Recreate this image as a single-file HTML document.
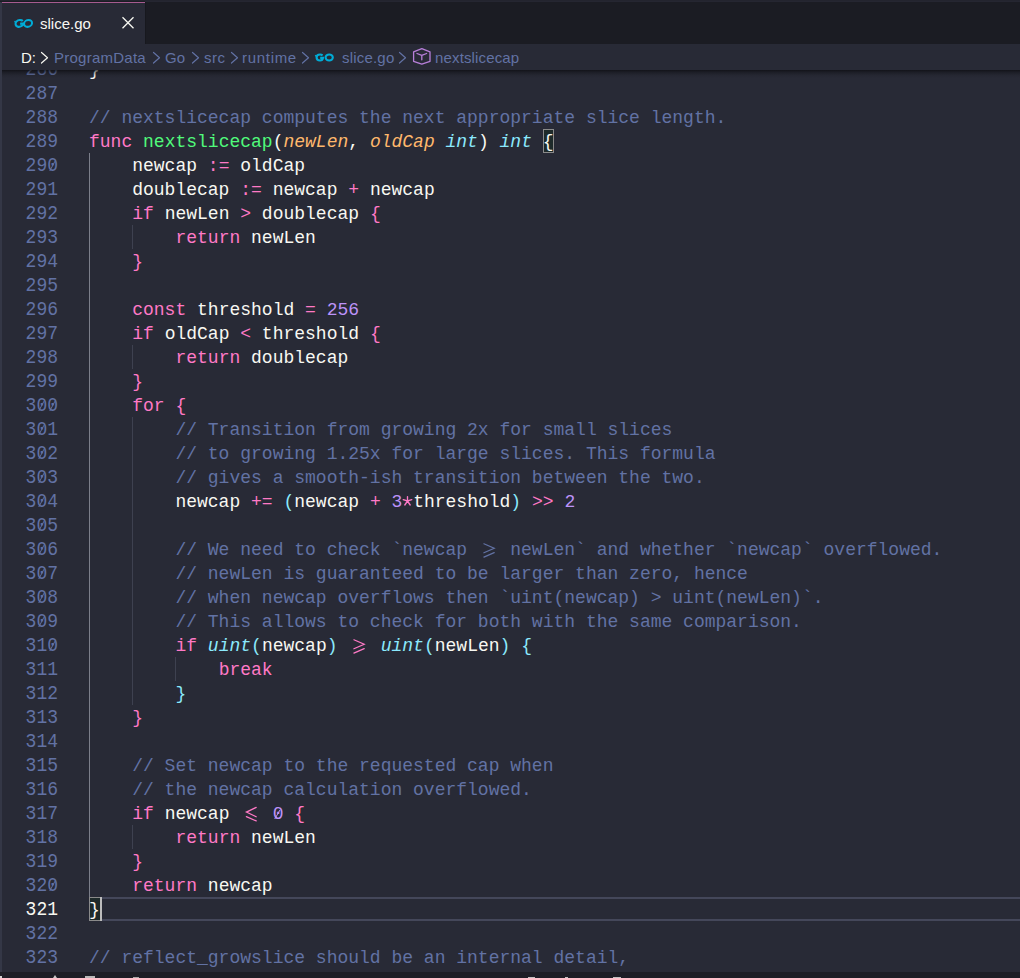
<!DOCTYPE html>
<html><head><meta charset="utf-8">
<style>
html,body{margin:0;padding:0}
body{width:1020px;height:978px;overflow:hidden;position:relative;background:#282a36;font-family:"Liberation Mono",monospace}
.tabs{position:absolute;left:0;top:0;width:1020px;height:44px;background:#1b1c23}
.tabs .topline{position:absolute;left:145px;top:0;width:875px;height:2px;background:#252631}
.tab{position:absolute;left:0;top:2px;width:145px;height:42px;background:#282a36}
.tab .bt{position:absolute;left:0;top:0;width:145px;height:1px;background:#a65b8f}
.tab .nm{position:absolute;left:40px;top:13px;font-family:"Liberation Sans",sans-serif;font-size:15px;color:#f8f8f2;line-height:18px}
.tabedge{position:absolute;left:145px;top:2px;width:1px;height:42px;background:#17181e}
.bc{position:absolute;left:0;top:44px;width:1020px;height:26px;background:#282a36;z-index:5;font-family:"Liberation Sans",sans-serif;font-size:15px;color:#6272a4}
.bc span{position:absolute;top:6px;line-height:16px;white-space:pre}
.shadow{position:absolute;left:0;top:70px;width:1020px;height:8px;background:linear-gradient(rgba(10,11,14,0.72),rgba(10,11,14,0.38) 30%,rgba(10,11,14,0.12) 65%,rgba(10,11,14,0));z-index:5}
.leftbar{position:absolute;left:0;top:2px;width:2px;height:976px;background:#343746;z-index:8}
.status{position:absolute;left:0;top:972px;width:1020px;height:6px;background:#1d1e26;z-index:8}
.ln{position:absolute;left:0;width:58px;transform:scaleY(1.08);transform-origin:0 17px;text-align:right;font-size:18px;line-height:24px;height:24px;color:#6272a4;white-space:pre}
.ln.act{color:#f8f8f2}
.cl{position:absolute;left:89px;font-size:18px;line-height:24px;height:24px;color:#f8f8f2;white-space:pre}
.ig{position:absolute;width:1px;background:#3e4150}
.ig.on{background:#7b7e8a}
.k{color:#ff79c6}.f{color:#f8f8f2}.fn{color:#50fa7b}.pa{color:#ffb86c;font-style:italic}.ty{color:#8be9fd;font-style:italic}
.nu{color:#bd93f9}.cm{color:#6272a4}.c{color:#8be9fd}.bm{color:#f8f8f2}
.lig{display:inline-block;width:21.6px;height:24px;vertical-align:top}
.hl{position:absolute;left:89px;top:897px;width:931px;height:20px;border-top:2px solid #44475a;border-bottom:2px solid #44475a}
.box{position:absolute;border:1px solid #8a8a8a;background:#1e2a2a;box-sizing:border-box}
.cursor{position:absolute;left:100px;top:897px;width:2px;height:24px;background:#bcbcbc;z-index:3}
.z{position:relative;display:inline-block;width:10.8px}
.z::after{content:"";position:absolute;left:4.8px;top:7.5px;width:1.1px;height:8.5px;background:currentColor;transform:skewX(-30deg)}
.ast{display:inline-block;width:10.8px;height:24px;vertical-align:top}
</style></head><body>
<div class="tabs">
  <div class="topline"></div>
  <div class="tab"><div class="bt"></div>
    <svg style="position:absolute;left:13px;top:16px" width="22" height="12" viewBox="0 0 22 12"><g fill="none" stroke="#00acd7" stroke-width="2.05" transform="translate(0.9,0) skewX(-8)"><path d="M1.2 2.9 L2.1 4.3" stroke-width="1.3"/><path d="M9.3 3 A4 3.45 0 1 0 10.4 5.6 L7 5.6"/><ellipse cx="14.9" cy="5.4" rx="3.95" ry="3.45"/></g></svg>
    <div class="nm">slice.go</div>
    <svg style="position:absolute;left:121px;top:14px" width="14" height="14" viewBox="0 0 14 14"><path d="M1.5 1.2 L12.5 12.2 M12.5 1.2 L1.5 12.2" stroke="#f8f8f2" stroke-width="1.3"/></svg>
  </div>
  <div class="tabedge"></div>
</div>
<div class="bc">
  <span style="left:21px;color:#f8f8f2">D:</span>
  <span style="left:54px;letter-spacing:0.25px">ProgramData</span>
  <span style="left:165px">Go</span>
  <span style="left:204px;letter-spacing:0.5px">src</span>
  <span style="left:242px;letter-spacing:0.7px">runtime</span>
  <span style="left:342px;letter-spacing:0.2px">slice.go</span>
  <span style="left:435px;letter-spacing:0.15px">nextslicecap</span>
  <svg style="position:absolute;left:0;top:0" width="1020" height="26" viewBox="0 44 1020 26">
    <g fill="none" stroke-width="1.2" stroke-linecap="round" stroke-linejoin="round">
      <path d="M41.5 52.5 L47.5 57.8 L41.5 63" stroke="#f8f8f2"/>
      <path d="M153.5 52.5 L159.5 57.8 L153.5 63" stroke="#6272a4"/>
      <path d="M192.5 52.5 L198.5 57.8 L192.5 63" stroke="#6272a4"/>
      <path d="M231.5 52.5 L237.5 57.8 L231.5 63" stroke="#6272a4"/>
      <path d="M302.5 52.5 L308.5 57.8 L302.5 63" stroke="#6272a4"/>
      <path d="M399.5 52.5 L405.5 57.8 L399.5 63" stroke="#6272a4"/>
      <path d="M421.8 48.6 L430 51.8 L430 61.3 L421.8 64.2 L413.6 61.3 L413.6 51.8 Z M417 53.5 L421.8 55.3 L426.6 53.5 M421.8 55.3 L421.8 59.8" stroke="#b77fd9" stroke-width="1.3"/>
    </g>
    <g transform="translate(315,53.5)" fill="none" stroke="#00acd7" stroke-width="2.1">
      <path d="M0.3 1.6 L1.1 3" stroke-width="1.3"/>
      <path d="M7.6 1.8 C6.8 1.2 5.9 1 5 1 C3 1 1.6 2.3 1.6 4 C1.6 5.7 3 7 5 7 C6.6 7 7.8 6 8 4.4 L5.2 4.4"/>
      <ellipse cx="14.2" cy="4" rx="3.6" ry="3"/>
    </g>
  </svg>
</div>
<div class="shadow"></div>
<div class="hl"></div>
<div class="box" style="left:543px;top:129px;width:11px;height:24px"></div>
<div class="box" style="left:89px;top:897px;width:13px;height:24px"></div>
<div class="ig on" style="left:89px;top:153px;height:744px"></div>
<div class="ig" style="left:132px;top:225px;height:24px"></div>
<div class="ig" style="left:132px;top:345px;height:24px"></div>
<div class="ig" style="left:132px;top:417px;height:288px"></div>
<div class="ig" style="left:175px;top:657px;height:24px"></div>
<div class="ig" style="left:132px;top:825px;height:24px"></div>
<div class="ln" style="top:58px">286</div>
<div class="ln" style="top:82px">287</div>
<div class="ln" style="top:106px">288</div>
<div class="ln" style="top:130px">289</div>
<div class="ln" style="top:154px">29<span class="z">0</span></div>
<div class="ln" style="top:178px">291</div>
<div class="ln" style="top:202px">292</div>
<div class="ln" style="top:226px">293</div>
<div class="ln" style="top:250px">294</div>
<div class="ln" style="top:274px">295</div>
<div class="ln" style="top:298px">296</div>
<div class="ln" style="top:322px">297</div>
<div class="ln" style="top:346px">298</div>
<div class="ln" style="top:370px">299</div>
<div class="ln" style="top:394px">3<span class="z">0</span><span class="z">0</span></div>
<div class="ln" style="top:418px">3<span class="z">0</span>1</div>
<div class="ln" style="top:442px">3<span class="z">0</span>2</div>
<div class="ln" style="top:466px">3<span class="z">0</span>3</div>
<div class="ln" style="top:490px">3<span class="z">0</span>4</div>
<div class="ln" style="top:514px">3<span class="z">0</span>5</div>
<div class="ln" style="top:538px">3<span class="z">0</span>6</div>
<div class="ln" style="top:562px">3<span class="z">0</span>7</div>
<div class="ln" style="top:586px">3<span class="z">0</span>8</div>
<div class="ln" style="top:610px">3<span class="z">0</span>9</div>
<div class="ln" style="top:634px">31<span class="z">0</span></div>
<div class="ln" style="top:658px">311</div>
<div class="ln" style="top:682px">312</div>
<div class="ln" style="top:706px">313</div>
<div class="ln" style="top:730px">314</div>
<div class="ln" style="top:754px">315</div>
<div class="ln" style="top:778px">316</div>
<div class="ln" style="top:802px">317</div>
<div class="ln" style="top:826px">318</div>
<div class="ln" style="top:850px">319</div>
<div class="ln" style="top:874px">32<span class="z">0</span></div>
<div class="ln act" style="top:898px">321</div>
<div class="ln" style="top:922px">322</div>
<div class="ln" style="top:946px">323</div>
<div class="ln" style="top:970px">324</div>
<div style="position:absolute;left:0;top:0;z-index:2">
<div class="cl" style="top:58px"><span class="f">}</span></div>
<div class="cl" style="top:82px"></div>
<div class="cl" style="top:106px"><span class="cm">// nextslicecap computes the next appropriate slice length.</span></div>
<div class="cl" style="top:130px"><span class="k">func</span> <span class="fn">nextslicecap</span><span class="f">(</span><span class="pa">newLen</span><span class="f">, </span><span class="pa">oldCap</span> <span class="ty">int</span><span class="f">)</span> <span class="ty">int</span> <span class="bm">{</span></div>
<div class="cl" style="top:154px"><span class="f">    newcap </span><span class="k">:=</span><span class="f"> oldCap</span></div>
<div class="cl" style="top:178px"><span class="f">    doublecap </span><span class="k">:=</span><span class="f"> newcap </span><span class="k">+</span><span class="f"> newcap</span></div>
<div class="cl" style="top:202px">    <span class="k">if</span><span class="f"> newLen </span><span class="k">&gt;</span><span class="f"> doublecap </span><span class="k">{</span></div>
<div class="cl" style="top:226px">        <span class="k">return</span><span class="f"> newLen</span></div>
<div class="cl" style="top:250px">    <span class="k">}</span></div>
<div class="cl" style="top:274px"></div>
<div class="cl" style="top:298px">    <span class="k">const</span><span class="f"> threshold </span><span class="k">=</span> <span class="nu">256</span></div>
<div class="cl" style="top:322px">    <span class="k">if</span><span class="f"> oldCap </span><span class="k">&lt;</span><span class="f"> threshold </span><span class="k">{</span></div>
<div class="cl" style="top:346px">        <span class="k">return</span><span class="f"> doublecap</span></div>
<div class="cl" style="top:370px">    <span class="k">}</span></div>
<div class="cl" style="top:394px">    <span class="k">for</span> <span class="k">{</span></div>
<div class="cl" style="top:418px"><span class="cm">        // Transition from growing 2x for small slices</span></div>
<div class="cl" style="top:442px"><span class="cm">        // to growing 1.25x for large slices. This formula</span></div>
<div class="cl" style="top:466px"><span class="cm">        // gives a smooth-ish transition between the two.</span></div>
<div class="cl" style="top:490px"><span class="f">        newcap </span><span class="k">+=</span> <span class="c">(</span><span class="f">newcap </span><span class="k">+</span> <span class="nu">3</span><svg class="ast" width="10.8" height="24" viewBox="0 0 10.8 24"><path d="M5.5 6.6 L5.5 11 M1.2 9.6 L5.5 11 L9.8 9.6 M2.8 15 L5.5 11 L8.2 15" fill="none" stroke="#ff79c6" stroke-width="1.35" stroke-linecap="round"/></svg><span class="f">threshold</span><span class="c">)</span> <span class="k">&gt;&gt;</span> <span class="nu">2</span></div>
<div class="cl" style="top:514px"></div>
<div class="cl" style="top:538px"><span class="cm">        // We need to check `newcap </span><svg class="lig" width="21.6" height="24" viewBox="0 0 21.6 24"><path d="M5.9 5.8 L16.2 10.3 L5.9 14.8 M16.2 14.6 L5.9 19.1" fill="none" stroke="#6272a4" stroke-width="1.25" stroke-linecap="round" stroke-linejoin="miter"/></svg><span class="cm"> newLen` and whether `newcap` overflowed.</span></div>
<div class="cl" style="top:562px"><span class="cm">        // newLen is guaranteed to be larger than zero, hence</span></div>
<div class="cl" style="top:586px"><span class="cm">        // when newcap overflows then `uint(newcap) &gt; uint(newLen)`.</span></div>
<div class="cl" style="top:610px"><span class="cm">        // This allows to check for both with the same comparison.</span></div>
<div class="cl" style="top:634px">        <span class="k">if</span> <span class="ty">uint</span><span class="c">(</span><span class="f">newcap</span><span class="c">)</span> <svg class="lig" width="21.6" height="24" viewBox="0 0 21.6 24"><path d="M5.9 5.8 L16.2 10.3 L5.9 14.8 M16.2 14.6 L5.9 19.1" fill="none" stroke="#ff79c6" stroke-width="1.25" stroke-linecap="round" stroke-linejoin="miter"/></svg> <span class="ty">uint</span><span class="c">(</span><span class="f">newLen</span><span class="c">)</span> <span class="c">{</span></div>
<div class="cl" style="top:658px">            <span class="k">break</span></div>
<div class="cl" style="top:682px">        <span class="c">}</span></div>
<div class="cl" style="top:706px">    <span class="k">}</span></div>
<div class="cl" style="top:730px"></div>
<div class="cl" style="top:754px"><span class="cm">    // Set newcap to the requested cap when</span></div>
<div class="cl" style="top:778px"><span class="cm">    // the newcap calculation overflowed.</span></div>
<div class="cl" style="top:802px">    <span class="k">if</span><span class="f"> newcap </span><svg class="lig" width="21.6" height="24" viewBox="0 0 21.6 24"><path d="M16.2 5.4 L6.4 10.1 L16.2 14.8 M6.4 14.6 L16.2 18.9" fill="none" stroke="#ff79c6" stroke-width="1.25" stroke-linecap="round" stroke-linejoin="miter"/></svg> <span class="nu z">0</span> <span class="k">{</span></div>
<div class="cl" style="top:826px">        <span class="k">return</span><span class="f"> newLen</span></div>
<div class="cl" style="top:850px">    <span class="k">}</span></div>
<div class="cl" style="top:874px">    <span class="k">return</span><span class="f"> newcap</span></div>
<div class="cl" style="top:898px"><span class="bm">}</span></div>
<div class="cl" style="top:922px"></div>
<div class="cl" style="top:946px"><span class="cm">// reflect_growslice should be an internal detail,</span></div>
<div class="cl" style="top:970px"><span class="cm">// but widely used packages access it using linkname.</span></div>
</div>
<div class="cursor"></div>
<div class="leftbar"></div>
<div style="position:absolute;left:0;top:0;width:1020px;height:1px;background:#23242e;z-index:9"></div>
<div class="status">
<div style="position:absolute;left:0;top:4px;width:2px;height:2px;background:#d0d0d0"></div>
<div style="position:absolute;left:53px;top:3px;width:4px;height:3px;background:#c8c8c8;clip-path:polygon(50% 0,100% 100%,0 100%)"></div>
<div style="position:absolute;left:85px;top:4px;width:10px;height:2px;background:#b8b8b8"></div>
<div style="position:absolute;left:133px;top:5px;width:6px;height:1px;background:#a8a8a8"></div>
<div style="position:absolute;left:528px;top:5px;width:7px;height:1px;background:#c0c0c0"></div>
<div style="position:absolute;left:565px;top:5px;width:3px;height:1px;background:#c0c0c0"></div>
<div style="position:absolute;left:613px;top:5px;width:8px;height:1px;background:#c0c0c0"></div>
</div>
</body></html>
